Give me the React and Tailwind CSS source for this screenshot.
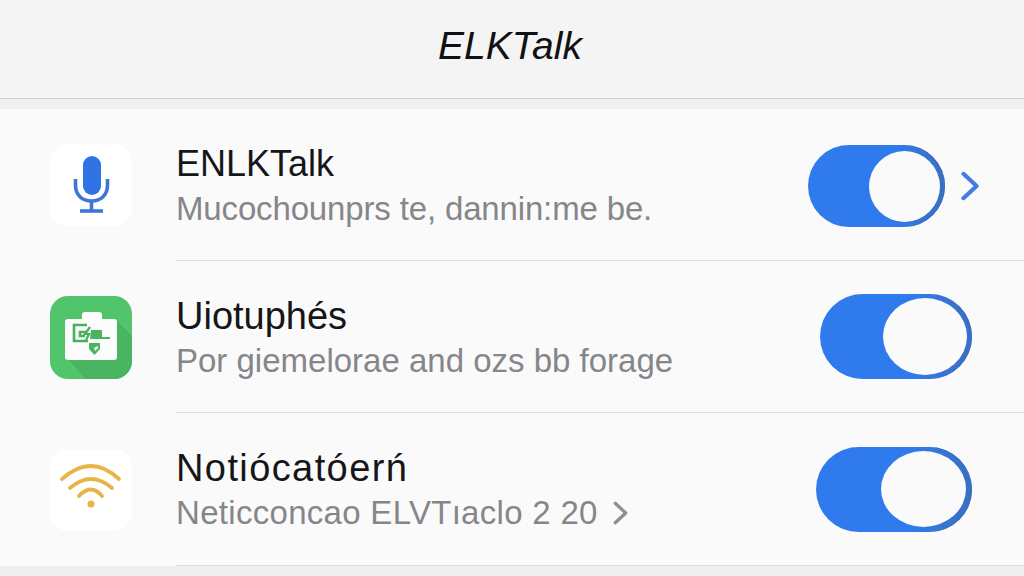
import React from "react";

function Toggle({ w, h, kw, kh, pr }) {
  return (
    <div
      className="flex items-center justify-end rounded-full bg-gradient-to-r from-[#2f7bee] from-60% to-[#3a6fc2] shadow-[inset_-2px_0_0_#3a6fc2]"
      style={{ width: w, height: h, paddingRight: pr }}
    >
      <div className="rounded-[50%] bg-[#fafafa]" style={{ width: kw, height: kh }} />
    </div>
  );
}

function Chevron({ className, color, width = 4.4 }) {
  return (
    <svg className={className} viewBox="0 0 20 32" fill="none" stroke={color} strokeWidth={width} strokeLinecap="round" strokeLinejoin="round">
      <path d="M3 3 L17 16 L3 29" />
    </svg>
  );
}

function MicIcon() {
  return (
    <div className="flex h-[82px] w-[82px] shrink-0 items-center justify-center rounded-[18px] bg-white">
      <svg width="82" height="82" viewBox="0 0 82 82" fill="none">
        <rect x="33" y="12" width="18" height="39" rx="9" fill="#2f73e4" />
        <path d="M25.5 35 V41 C25.5 51 32 57 41.5 57 C51 57 57.5 51 57.5 41 V35" stroke="#3f76d6" strokeWidth="3.6" />
        <path d="M41.5 57 V67" stroke="#3f76d6" strokeWidth="3.6" />
        <path d="M30 67 H53" stroke="#3f76d6" strokeWidth="3.6" />
      </svg>
    </div>
  );
}

function GreenIcon() {
  return (
    <div className="h-[83px] w-[82px] shrink-0 overflow-hidden rounded-[18px] bg-[#52c46b]">
      <svg width="82" height="83" viewBox="0 0 82 83" fill="none">
        <path d="M15 60 L67 25 L82 40 V83 H36 Z" fill="#49b561" />
        <path d="M32 23 V19 Q32 16 35 16 H49 Q52 16 52 19 V23 H64 Q67 23 67 26 V61 Q67 64 64 64 H18 Q15 64 15 61 V26 Q15 23 18 23 Z" fill="#fbfcfb" />
        <path d="M37 29 H24 V45 H38 M37 36 H30 V40 H35" stroke="#46b25c" strokeWidth="2.6" />
        <path d="M40 31 L35 38 H39 L36 44" stroke="#46b25c" strokeWidth="2.2" />
        <path d="M41 34 H52 V41 H60 V43 H40 Z" fill="#49b561" />
        <path d="M39 47 H50 V53 L44.5 59 L39 53 Z" fill="#49b561" />
        <path d="M44 52 L48 50 V52 L45 55 Z" fill="#fbfcfb" />
      </svg>
    </div>
  );
}

function WifiIcon() {
  return (
    <div className="h-[82px] w-[82px] shrink-0 rounded-[18px] bg-white">
      <svg width="82" height="82" viewBox="0 0 82 82" fill="none" stroke="#e6b546" strokeWidth="3.8" strokeLinecap="round">
        <path d="M12 30 Q41 4 69 30" />
        <path d="M20 39 Q41 21 62 39" />
        <path d="M29 47 Q41 34 52 47" />
        <circle cx="41" cy="55" r="3.5" fill="#e6b546" stroke="none" />
      </svg>
    </div>
  );
}

function Row({ icon, title, sub, right, height, subExtra, titleClass, subClass }) {
  return (
    <div className="flex items-stretch pl-[50px]" style={{ height }}>
      <div className="flex w-[126px] shrink-0 items-center">{icon}</div>
      <div className="flex min-w-0 flex-1 items-center justify-between border-b border-[#dedee2]">
        <div className="mt-[4px] flex flex-col">
          <div className={`whitespace-nowrap leading-[44px] text-[#161618] ${titleClass}`}>{title}</div>
          <div className={`flex items-center whitespace-nowrap text-[33px] leading-[46px] text-[#86868a] ${subClass}`}>
            {sub}
            {subExtra}
          </div>
        </div>
        {right}
      </div>
    </div>
  );
}

export default function App() {
  return (
    <div className="flex h-[576px] w-[1024px] flex-col overflow-hidden bg-[#fafafa] font-['Liberation_Sans',sans-serif]">
      <header className="flex h-[99px] shrink-0 items-center justify-center border-b border-[#cfcfd4] bg-[#f4f4f5] pr-[4px] pb-[7px]">
        <h1 className="text-[39px] font-normal italic leading-none text-[#111113]">ELKTalk</h1>
      </header>
      <div className="h-[10px] shrink-0 bg-[#f0f0f2]" />
      <main className="flex-1">
        <Row
          height={152}
          icon={<MicIcon />}
          title="ENLKTalk"
          titleClass="text-[36px]"
          sub="Mucochounprs te, dannin:me be."
          subClass="tracking-[-0.15px]"
          right={
            <div className="mr-[44px] flex items-center gap-[15px] pt-[3px]">
              <Toggle w={137} h={82} kw={71} kh={71} pr={5} />
              <Chevron className="h-[30px] w-[20px]" color="#3f7ee0" />
            </div>
          }
        />
        <Row
          height={152}
          icon={<GreenIcon />}
          title="Uiotuphés"
          titleClass="text-[38px]"
          sub="Por giemelorae and ozs bb forage"
          right={
            <div className="mr-[52px]">
              <Toggle w={152} h={85} kw={84} kh={77} pr={5} />
            </div>
          }
        />
        <Row
          height={153}
          icon={<WifiIcon />}
          title="Notióсatóerń"
          titleClass="text-[38px] tracking-[1.4px]"
          sub="Neticconcao ELVTıaclo 2 20"
          subClass="tracking-[0.3px]"
          subExtra={<Chevron className="ml-[14px] h-[24px] w-[17px]" color="#8f8f93" />}
          right={
            <div className="mr-[52px]">
              <Toggle w={156} h={85} kw={85} kh={76} pr={6} />
            </div>
          }
        />
      </main>
      <div className="h-[10px] shrink-0 bg-[#efeff1]" />
    </div>
  );
}
